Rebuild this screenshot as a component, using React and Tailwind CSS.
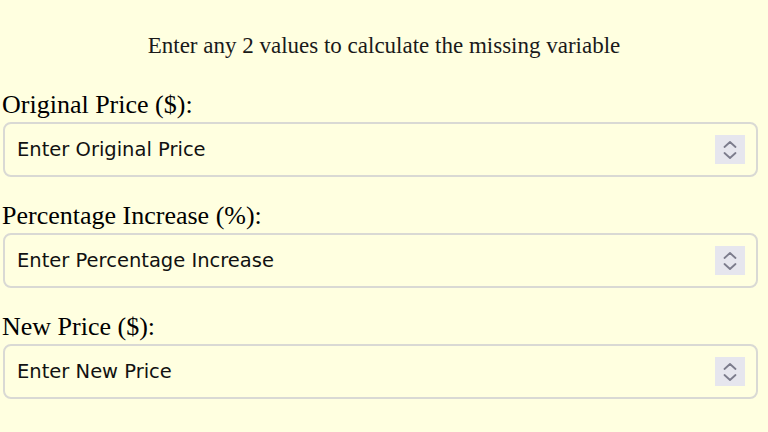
import { useState } from 'react'

const fields = [
  { id: 'original', label: 'Original Price ($):', placeholder: 'Enter Original Price' },
  { id: 'percent', label: 'Percentage Increase (%):', placeholder: 'Enter Percentage Increase' },
  { id: 'newPrice', label: 'New Price ($):', placeholder: 'Enter New Price' },
]

function Spinner() {
  return (
    <div className="pointer-events-none absolute right-[13px] top-[13px] flex h-[29px] w-[30px] flex-col items-center justify-center gap-[4px] bg-[#e6e6ee]">
      <svg width="14" height="7" viewBox="0 0 14 7" fill="none" stroke="#7c7c8c" strokeWidth="1.8" strokeLinecap="round" strokeLinejoin="round">
        <path d="M1.5 6L7 1l5.5 5" />
      </svg>
      <svg width="14" height="7" viewBox="0 0 14 7" fill="none" stroke="#7c7c8c" strokeWidth="1.8" strokeLinecap="round" strokeLinejoin="round">
        <path d="M1.5 1L7 6l5.5-5" />
      </svg>
    </div>
  )
}

export default function App() {
  const [values, setValues] = useState({ original: '', percent: '', newPrice: '' })

  return (
    <div className="min-h-[432px] w-full bg-[#ffffe0] pt-[32px] font-['Liberation_Serif',serif] text-black">
      <p className="text-center text-[23px] leading-[28px] text-[#1a1a1a]">
        Enter any 2 values to calculate the missing variable
      </p>

      <div className="ml-[3px] mt-[30px] flex w-[755px] flex-col gap-[24px]">
        {fields.map((f) => (
          <div key={f.id} className="flex flex-col gap-[2px]">
            <label htmlFor={f.id} className="-ml-[1px] text-[26px] leading-[30px]">
              {f.label}
            </label>
            <div className="relative">
              <input
                id={f.id}
                type="text"
                inputMode="decimal"
                value={values[f.id]}
                onChange={(e) => setValues({ ...values, [f.id]: e.target.value })}
                placeholder={f.placeholder}
                className="h-[55px] w-full rounded-lg border-2 border-[#d9d9d4] bg-[#ffffe0] px-[12px] font-['DejaVu_Sans',sans-serif] text-[19.5px] text-black outline-none placeholder:text-[#111]"
              />
              <Spinner />
            </div>
          </div>
        ))}
      </div>
    </div>
  )
}
